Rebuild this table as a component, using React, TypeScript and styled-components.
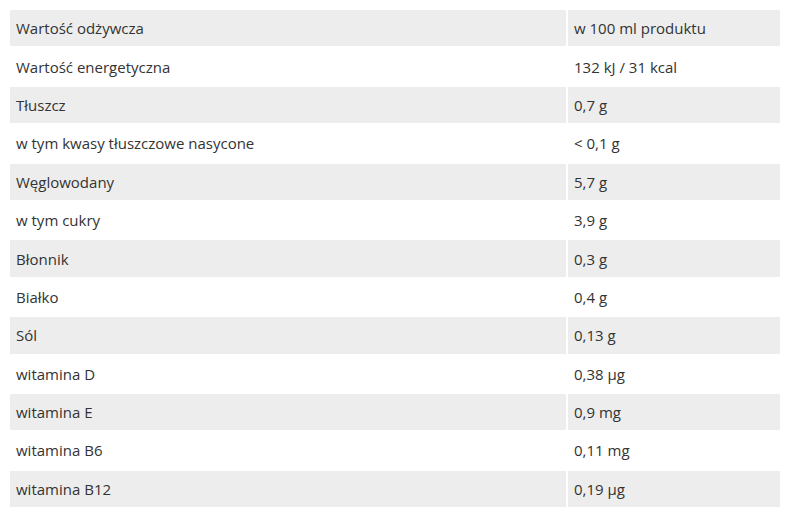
import React from "react";
import styled, { createGlobalStyle } from "styled-components";

const Global = createGlobalStyle`
  html, body { margin: 0; padding: 0; background: #ffffff; }
  body { margin: 8px; }
`;

const Table = styled.table`
  width: 774px;
  border-collapse: separate;
  border-spacing: 2px;
  font-family: "Open Sans", "Noto Sans", sans-serif;
  font-size: 15px;
  color: #333333;
`;

const Row = styled.tr<{ $shaded: boolean }>`
  background: ${(p) => (p.$shaded ? "#ededed" : "#ffffff")};
`;

const Cell = styled.td<{ $value?: boolean }>`
  height: 36.4px;
  box-sizing: border-box;
  padding: 0 6px;
  line-height: 20px;
  vertical-align: middle;
  width: ${(p) => (p.$value ? "212px" : "auto")};
`;

const rows: [string, string][] = [
  ["Wartość odżywcza", "w 100 ml produktu"],
  ["Wartość energetyczna", "132 kJ / 31 kcal"],
  ["Tłuszcz", "0,7 g"],
  ["w tym kwasy tłuszczowe nasycone", "< 0,1 g"],
  ["Węglowodany", "5,7 g"],
  ["w tym cukry", "3,9 g"],
  ["Błonnik", "0,3 g"],
  ["Białko", "0,4 g"],
  ["Sól", "0,13 g"],
  ["witamina D", "0,38 µg"],
  ["witamina E", "0,9 mg"],
  ["witamina B6", "0,11 mg"],
  ["witamina B12", "0,19 µg"],
];

export default function App() {
  return (
    <>
      <Global />
      <Table>
        <tbody>
          {rows.map(([name, value], i) => (
            <Row key={name} $shaded={i % 2 === 0}>
              <Cell>{name}</Cell>
              <Cell $value>{value}</Cell>
            </Row>
          ))}
        </tbody>
      </Table>
    </>
  );
}
